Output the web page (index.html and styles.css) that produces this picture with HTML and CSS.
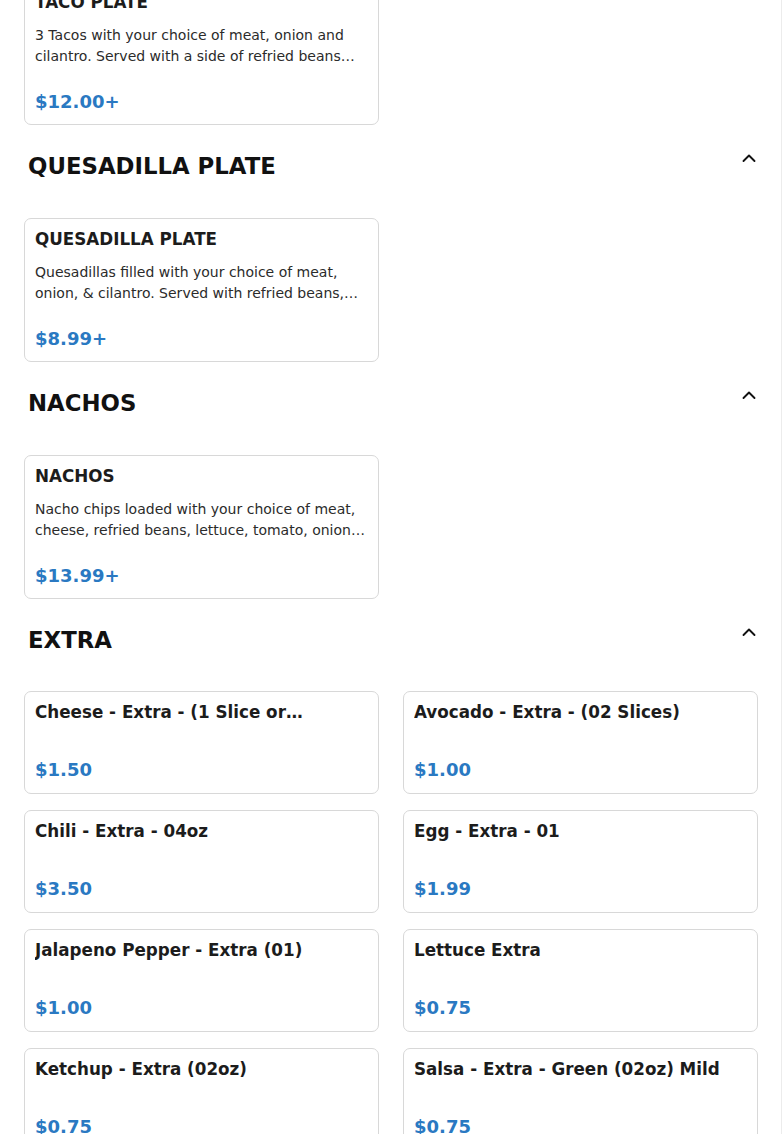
FILE: index.html
```html
<!DOCTYPE html>
<html>
<head>
<meta charset="utf-8">
<link rel="stylesheet" href="styles.css">
</head>
<body>
<div class="page">
  <div class="menu">
    <section class="section">
      <div class="grid">
        <div class="card">
          <div class="title">TACO PLATE</div>
          <div class="desc">3 Tacos with your choice of meat, onion and cilantro. Served with a side of refried beans and rice.</div>
          <div class="price">$12.00+</div>
        </div>
      </div>
    </section>

    <section class="section">
      <div class="head">
        <h2>QUESADILLA PLATE</h2>
        <svg class="chev" width="16" height="16" viewBox="0 0 16 16"><path d="M2.5 9 L8 3.5 L13.5 9" fill="none" stroke="#111" stroke-width="1.9" stroke-linecap="round" stroke-linejoin="round"/></svg>
      </div>
      <div class="grid">
        <div class="card">
          <div class="title">QUESADILLA PLATE</div>
          <div class="desc">Quesadillas filled with your choice of meat, onion, &amp; cilantro. Served with refried beans, rice and salad.</div>
          <div class="price">$8.99+</div>
        </div>
      </div>
    </section>

    <section class="section">
      <div class="head">
        <h2>NACHOS</h2>
        <svg class="chev" width="16" height="16" viewBox="0 0 16 16"><path d="M2.5 9 L8 3.5 L13.5 9" fill="none" stroke="#111" stroke-width="1.9" stroke-linecap="round" stroke-linejoin="round"/></svg>
      </div>
      <div class="grid">
        <div class="card">
          <div class="title">NACHOS</div>
          <div class="desc">Nacho chips loaded with your choice of meat, cheese, refried beans, lettuce, tomato, onion, sour cream and jalapeños.</div>
          <div class="price">$13.99+</div>
        </div>
      </div>
    </section>

    <section class="section">
      <div class="head extra-head">
        <h2>EXTRA</h2>
        <svg class="chev" width="16" height="16" viewBox="0 0 16 16"><path d="M2.5 9 L8 3.5 L13.5 9" fill="none" stroke="#111" stroke-width="1.9" stroke-linecap="round" stroke-linejoin="round"/></svg>
      </div>
      <div class="grid">
        <div class="card plain">
          <div class="title">Cheese - Extra - (1 Slice or Shredded)</div>
          <div class="desc"></div>
          <div class="price">$1.50</div>
        </div>
        <div class="card plain">
          <div class="title">Avocado - Extra - (02 Slices)</div>
          <div class="desc"></div>
          <div class="price">$1.00</div>
        </div>
        <div class="card plain">
          <div class="title">Chili - Extra - 04oz</div>
          <div class="desc"></div>
          <div class="price">$3.50</div>
        </div>
        <div class="card plain">
          <div class="title">Egg - Extra - 01</div>
          <div class="desc"></div>
          <div class="price">$1.99</div>
        </div>
        <div class="card plain">
          <div class="title">Jalapeno Pepper - Extra (01)</div>
          <div class="desc"></div>
          <div class="price">$1.00</div>
        </div>
        <div class="card plain">
          <div class="title">Lettuce Extra</div>
          <div class="desc"></div>
          <div class="price">$0.75</div>
        </div>
        <div class="card plain">
          <div class="title">Ketchup - Extra (02oz)</div>
          <div class="desc"></div>
          <div class="price">$0.75</div>
        </div>
        <div class="card plain">
          <div class="title">Salsa - Extra - Green (02oz) Mild</div>
          <div class="desc"></div>
          <div class="price">$0.75</div>
        </div>
      </div>
    </section>
  </div>
</div>
</body>
</html>
```

FILE: styles.css
```css
html, body {
  margin: 0;
  padding: 0;
  background: #fff;
}
body {
  font-family: "DejaVu Sans", "Liberation Sans", sans-serif;
  color: #1c1c1c;
  overflow: hidden;
}
.page {
  box-sizing: border-box;
  width: 782px;
  padding: 0 23px 40px 24px;
  border-right: 1px solid #ececec;
}
.menu {
  margin-top: -19px;
}
.head {
  display: flex;
  justify-content: space-between;
  align-items: flex-start;
  padding: 27px 1px 0 4px;
  margin-bottom: 38px;
}
.extra-head {
  margin-bottom: 37px;
}
.head h2 {
  margin: 0;
  font-size: 22.8px;
  line-height: 28px;
  font-weight: bold;
  color: #111;
}
.chev {
  display: block;
  flex: none;
}
.grid {
  display: grid;
  grid-template-columns: 1fr 1fr;
  column-gap: 24px;
  row-gap: 16px;
}
.card {
  border: 1px solid #d8d8d8;
  border-radius: 7px;
  padding: 10px;
  background: #fff;
}
.card.plain {
  padding-bottom: 11px;
}
.title {
  font-size: 16.75px;
  line-height: 20px;
  font-weight: bold;
  color: #1c1c1c;
  display: -webkit-box;
  -webkit-box-orient: vertical;
  -webkit-line-clamp: 1;
  overflow: hidden;
}
.desc {
  margin-top: 13px;
  font-size: 14px;
  line-height: 21px;
  color: #2b2b2b;
  display: -webkit-box;
  -webkit-box-orient: vertical;
  -webkit-line-clamp: 2;
  overflow: hidden;
}
.price {
  margin-top: 23px;
  font-size: 18px;
  line-height: 24px;
  font-weight: bold;
  color: #2a79c2;
}
```
